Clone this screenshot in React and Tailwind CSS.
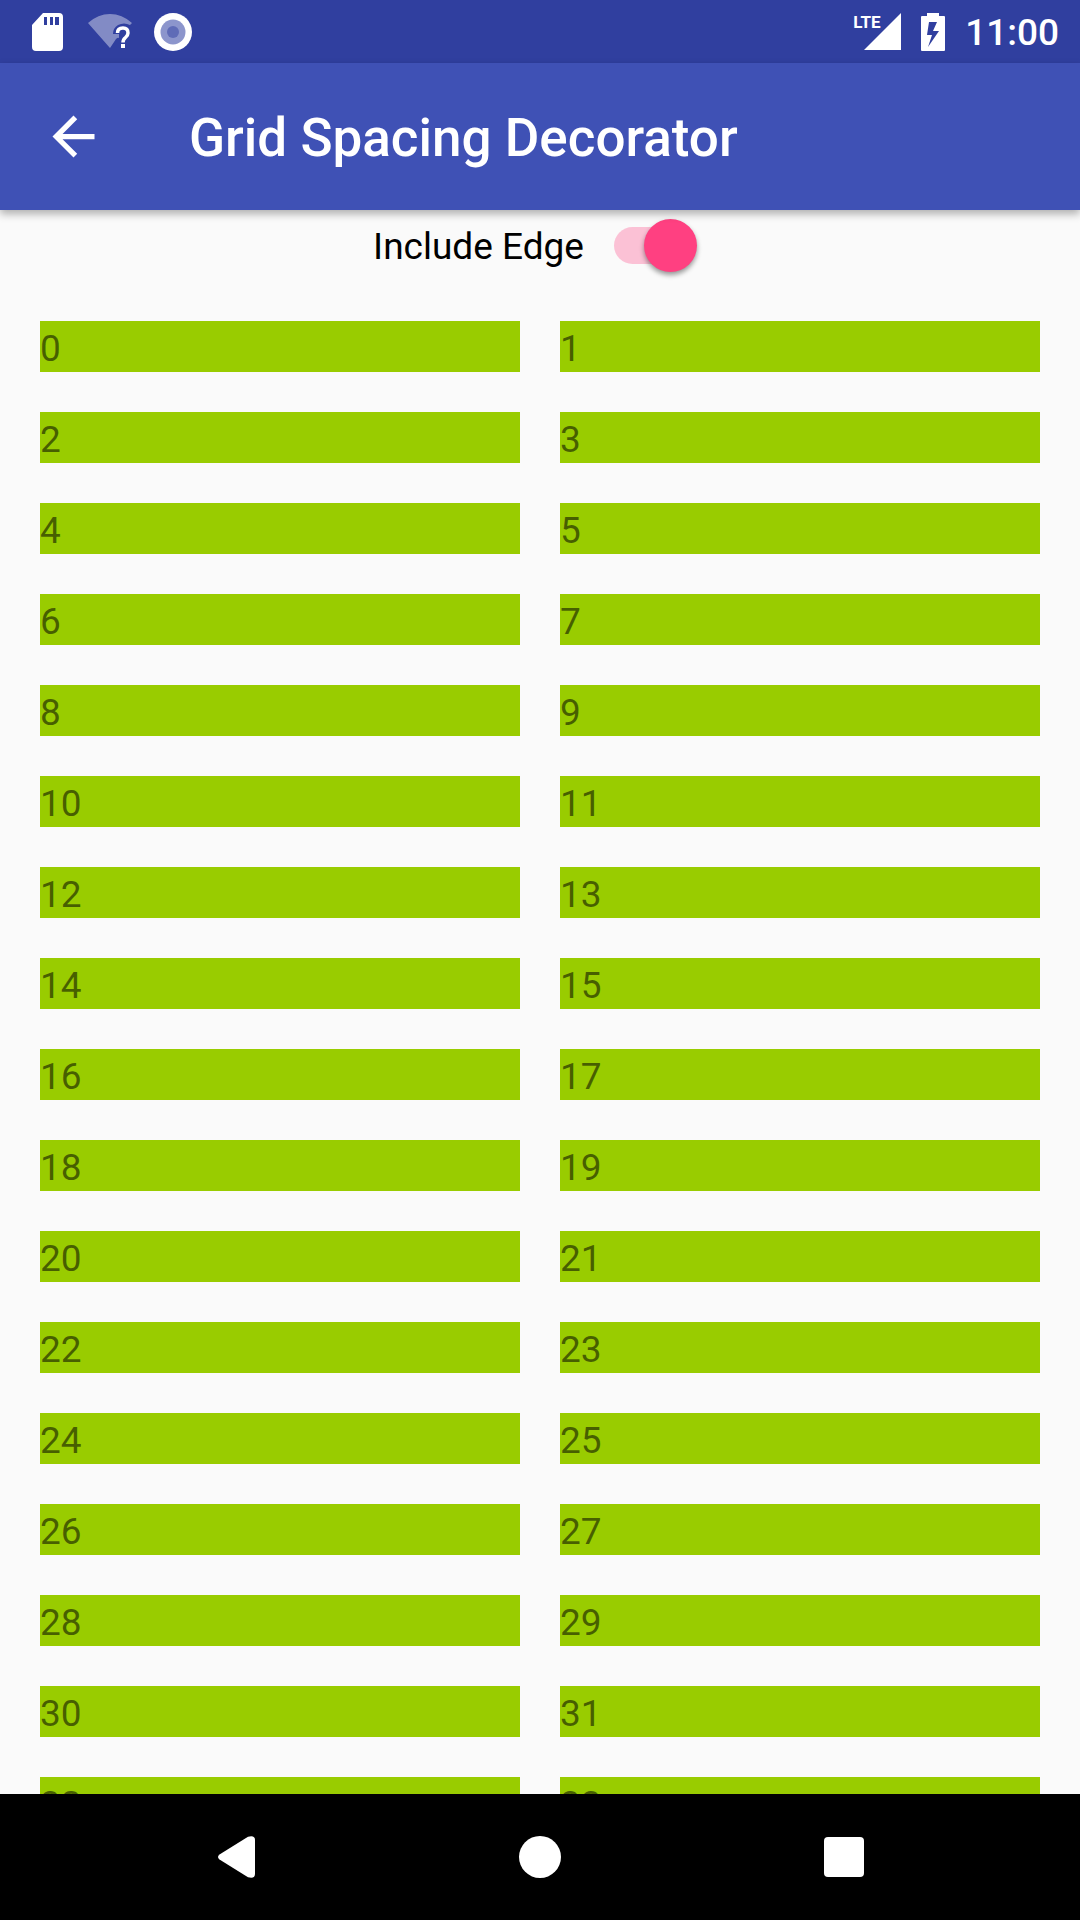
import { useState } from "react";

const items = Array.from({ length: 34 }, (_, i) => i);

function StatusBar() {
  return (
    <div className="flex h-[63px] shrink-0 items-center justify-between bg-[#303f9f] pl-8 pr-[21px] text-white">
      <div className="flex items-center gap-6">
        <svg className="h-[38px] w-8" viewBox="0 0 32 38" aria-hidden="true">
          <path
            fill="currentColor"
            fillRule="evenodd"
            d="M11 0H27Q31 0 31 4V34Q31 38 27 38H4Q0 38 0 34V12ZM12 4V12H15V4ZM18 4V12H21V4ZM23 4V12H27V4Z"
          />
        </svg>
        <svg className="h-[38px] w-[42px] overflow-visible" viewBox="0 0 42 38" aria-hidden="true">
          <path
            fill="currentColor"
            fillOpacity="0.4"
            d="M0 10Q10 1 22 1T44 10L42 12Q36 9 30 12Q25 15 25 21H31V25Q30 24 28 26L22 35Z"
          />
          <path
            d="M29.500 20Q29.500 15 35 15Q40 15 40 20Q40 22.500 37.500 24.500Q35 26.500 35 29.500"
            fill="none"
            stroke="currentColor"
            strokeWidth="3.500"
          />
          <rect x="33" y="31" width="4" height="4" fill="currentColor" />
        </svg>
        <svg className="size-[38px]" viewBox="0 0 38 38" aria-hidden="true">
          <circle cx="19" cy="19" r="19" fill="#fff" />
          <circle cx="19" cy="19" r="12.500" fill="#8c95cc" />
          <circle cx="19" cy="19" r="6" fill="#5f6bb7" />
        </svg>
      </div>
      <div className="flex items-center gap-5">
        <div className="relative h-[38px] w-12">
          <svg className="size-full" viewBox="0 0 48 38" aria-hidden="true">
            <path fill="currentColor" d="M48 0V37H11Z" />
          </svg>
          <span className="absolute left-0 top-0 text-[17px] font-bold leading-[18px]">LTE</span>
        </div>
        <svg className="h-[38px] w-6" viewBox="0 0 24 38" aria-hidden="true">
          <path
            fill="currentColor"
            fillRule="evenodd"
            d="M6 0H18V3H23Q24 3 24 4V37Q24 38 23 38H1Q0 38 0 37V4Q0 3 1 3H6ZM8 9L6 22H11L7 34L18 18H12L16 9Z"
          />
        </svg>
        <time className="pt-[3px] text-[37px] font-medium leading-[44px]">11:00</time>
      </div>
    </div>
  );
}

function AppBar() {
  return (
    <header className="z-10 flex h-[147px] shrink-0 items-center gap-[84px] bg-[#3f51b5] px-[42px] text-white shadow-[0_4px_8px_rgba(0,0,0,0.3)]">
      <button type="button" aria-label="Navigate up">
        <svg className="size-[63px]" viewBox="0 0 24 24" fill="currentColor" aria-hidden="true">
          <path d="M20 11H7.830l5.590-5.590L12 4l-8 8 8 8 1.410-1.410L7.830 13H20v-2z" />
        </svg>
      </button>
      <h1 className="pt-[3px] text-[53px] font-medium leading-[62px]">Grid Spacing Decorator</h1>
    </header>
  );
}

function EdgeSwitch({ checked, onChange }) {
  return (
    <div className="flex h-[71px] shrink-0 items-center justify-center gap-6 pr-[10px]">
      <label htmlFor="include-edge" className="pt-[3px] text-[37px] leading-[44px] text-black">
        Include Edge
      </label>
      <input
        id="include-edge"
        type="checkbox"
        role="switch"
        checked={checked}
        onChange={(e) => onChange(e.target.checked)}
        className="relative h-[53px] w-[89px] appearance-none before:absolute before:inset-x-[6px] before:inset-y-2 before:rounded-full before:bg-black/25 after:absolute after:left-0 after:top-0 after:size-[53px] after:rounded-full after:bg-[#fafafa] after:shadow-[0_3px_5px_rgba(0,0,0,0.4)] checked:before:bg-[#ff4081]/30 checked:after:left-auto checked:after:right-0 checked:after:bg-[#ff4081]"
      />
    </div>
  );
}

function NavBar() {
  return (
    <nav className="grid h-[126px] shrink-0 grid-cols-3 bg-black px-[84px] text-white">
      <button type="button" aria-label="Back" className="flex items-center justify-center">
        <svg className="size-[42px]" viewBox="0 0 42 42" fill="currentColor" aria-hidden="true">
          <path d="M4.500 18.500L33 .800Q40-1 40 4V38Q40 43 33 41.200L4.500 23.500Q1.500 21 4.500 18.500Z" />
        </svg>
      </button>
      <button type="button" aria-label="Home" className="flex items-center justify-center">
        <span className="size-[42px] rounded-full bg-white" />
      </button>
      <button type="button" aria-label="Overview" className="flex items-center justify-center">
        <span className="size-10 rounded bg-white" />
      </button>
    </nav>
  );
}

export default function App() {
  const [includeEdge, setIncludeEdge] = useState(true);
  return (
    <div className="flex h-screen flex-col bg-[#fafafa] font-['Roboto',sans-serif]">
      <StatusBar />
      <AppBar />
      <main className="flex min-h-0 flex-1 flex-col">
        <EdgeSwitch checked={includeEdge} onChange={setIncludeEdge} />
        <ul
          className={`grid min-h-0 flex-1 auto-rows-[51px] grid-cols-2 gap-10 overflow-y-auto [scrollbar-width:none] ${
            includeEdge ? "p-10" : "p-0"
          }`}
        >
          {items.map((n) => (
            <li key={n} className="bg-[#99cc00] text-[37px] leading-[56px] text-black/54">
              {n}
            </li>
          ))}
        </ul>
      </main>
      <NavBar />
    </div>
  );
}
